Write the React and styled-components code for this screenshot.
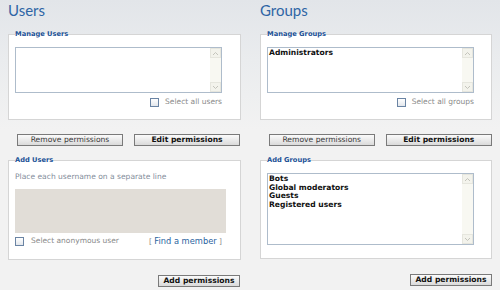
import React from "react";
import styled, { createGlobalStyle } from "styled-components";

const GlobalStyle = createGlobalStyle`
  html, body { margin: 0; padding: 0; }
  body {
    width: 500px;
    height: 290px;
    overflow: hidden;
    background: linear-gradient(#e2e5e9 0px, #eaecee 60px, #f2f2f2 130px, #f2f2f2 290px);
    font-family: "DejaVu Sans", Verdana, sans-serif;
  }
`;

const Page = styled.div`
  display: grid;
  grid-template-columns: 233px 232px;
  column-gap: 19px;
  padding: 0 8px;
  height: 290px;
  box-sizing: border-box;
`;

const Column = styled.section`
  display: flex;
  flex-direction: column;
`;

const Title = styled.h2`
  margin: 0;
  height: 20px;
  font: 400 15px/20px Lato, "Open Sans", sans-serif;
  color: #2e65a5;
`;

const Fieldset = styled.fieldset`
  margin: ${(p) => p.$mt}px 0 0;
  padding: ${(p) => p.$pt}px 6px ${(p) => p.$pb}px;
  border: 1px solid #d5d5d5;
  background: #fff;
  min-inline-size: 0;
`;

const Legend = styled.legend`
  padding: 0;
  font: bold 6.7px/8px "DejaVu Sans", Verdana, sans-serif;
  color: #1b5196;
`;

const ListBox = styled.div`
  display: flex;
  width: 207px;
  height: ${(p) => p.$h}px;
  box-sizing: border-box;
  border: 1px solid #aebccb;
  background: #fff;
`;

const Items = styled.div`
  flex: 1;
  padding: 1px 1px;
  font: bold 7.6px/8.7px "DejaVu Sans", Verdana, sans-serif;
  color: #111;
`;

const Scrollbar = styled.div`
  width: 11px;
  display: flex;
  flex-direction: column;
  justify-content: space-between;
  background: #f8f8f2;
`;

const ScrollButton = styled.div`
  height: 10px;
  box-sizing: border-box;
  border: 1px solid #e6e6de;
  background: #f3f3ec;
  display: flex;
  align-items: center;
  justify-content: center;
`;

const CheckRow = styled.div`
  display: flex;
  align-items: center;
  justify-content: ${(p) => p.$justify};
  width: ${(p) => p.$w}px;
  height: 10px;
  margin-top: ${(p) => p.$mt}px;
`;

const CheckLabel = styled.label`
  display: flex;
  align-items: center;
  gap: ${(p) => p.$gap}px;
  font-size: 7.5px;
  line-height: 10px;
  color: #8a8a8a;
`;

const Check = styled.span`
  display: inline-block;
  width: 9px;
  height: 9px;
  box-sizing: border-box;
  border: 1px solid #6a84a4;
  background: linear-gradient(#ffffff, #e3e7ec);
`;

const Hint = styled.p`
  margin: 0;
  font-size: 7.55px;
  line-height: 9px;
  color: #7f8b99;
`;

const UserArea = styled.div`
  width: 211px;
  height: 44px;
  margin-top: 8px;
  background: #e1ddd7;
`;

const FindLink = styled.span`
  font-size: 7.5px;
  color: #8a8a8a;
  & a {
    font-size: 8.3px;
    color: #2a64a0;
    text-decoration: none;
  }
`;

const ButtonRow = styled.div`
  display: flex;
  gap: 11px;
  padding-left: 9px;
  margin-top: 14px;
`;

const Button = styled.button`
  width: ${(p) => p.$w}px;
  height: 12px;
  box-sizing: border-box;
  padding: 0;
  border: 1px solid #7a7a7a;
  background: linear-gradient(#fbfbfb, #dadada);
  font-family: "DejaVu Sans", Verdana, sans-serif;
  font-size: 7.6px;
  line-height: 10px;
  font-weight: ${(p) => (p.$bold ? "bold" : "normal")};
  color: ${(p) => (p.$bold ? "#111" : "#3a3a3a")};
`;

const SubmitRow = styled.div`
  display: flex;
  justify-content: flex-end;
  margin-top: ${(p) => p.$mt}px;
  padding-right: ${(p) => p.$pr}px;
`;

const Chevron = ({ up }) => (
  <svg width="7" height="5" viewBox="0 0 7 5">
    <path
      d={up ? "M1 4 L3.5 1.5 L6 4" : "M1 1 L3.5 3.5 L6 1"}
      fill="none"
      stroke="#c4c4bc"
      strokeWidth="1"
    />
  </svg>
);

const List = ({ h, items }) => (
  <ListBox $h={h}>
    <Items>
      {items.map((i) => (
        <div key={i}>{i}</div>
      ))}
    </Items>
    <Scrollbar>
      <ScrollButton>
        <Chevron up />
      </ScrollButton>
      <ScrollButton>
        <Chevron />
      </ScrollButton>
    </Scrollbar>
  </ListBox>
);

export default function App() {
  return (
    <>
      <GlobalStyle />
      <Page>
        <Column>
          <Title>Users</Title>
          <Fieldset $mt={10} $pt={9} $pb={12}>
            <Legend>Manage Users</Legend>
            <List h={46} items={[]} />
            <CheckRow $w={207} $justify="flex-end" $mt={4}>
              <CheckLabel $gap={6}>
                <Check />
                Select all users
              </CheckLabel>
            </CheckRow>
          </Fieldset>
          <ButtonRow>
            <Button $w={106}>Remove permissions</Button>
            <Button $w={106} $bold>
              Edit permissions
            </Button>
          </ButtonRow>
          <Fieldset $mt={10} $pt={8} $pb={13}>
            <Legend>Add Users</Legend>
            <Hint>Place each username on a separate line</Hint>
            <UserArea />
            <CheckRow $w={207} $justify="space-between" $mt={3}>
              <CheckLabel $gap={7}>
                <Check />
                Select anonymous user
              </CheckLabel>
              <FindLink>
                [ <a href="#">Find a member</a> ]
              </FindLink>
            </CheckRow>
          </Fieldset>
          <SubmitRow $mt={15} $pr={1}>
            <Button $w={82} $bold>
              Add permissions
            </Button>
          </SubmitRow>
        </Column>

        <Column>
          <Title>Groups</Title>
          <Fieldset $mt={10} $pt={9} $pb={12}>
            <Legend>Manage Groups</Legend>
            <List h={46} items={["Administrators"]} />
            <CheckRow $w={207} $justify="flex-end" $mt={4}>
              <CheckLabel $gap={6}>
                <Check />
                Select all groups
              </CheckLabel>
            </CheckRow>
          </Fieldset>
          <ButtonRow>
            <Button $w={106}>Remove permissions</Button>
            <Button $w={107} $bold>
              Edit permissions
            </Button>
          </ButtonRow>
          <Fieldset $mt={10} $pt={9} $pb={13}>
            <Legend>Add Groups</Legend>
            <List
              h={72}
              items={["Bots", "Global moderators", "Guests", "Registered users"]}
            />
          </Fieldset>
          <SubmitRow $mt={15} $pr={0}>
            <Button $w={82} $bold>
              Add permissions
            </Button>
          </SubmitRow>
        </Column>
      </Page>
    </>
  );
}
